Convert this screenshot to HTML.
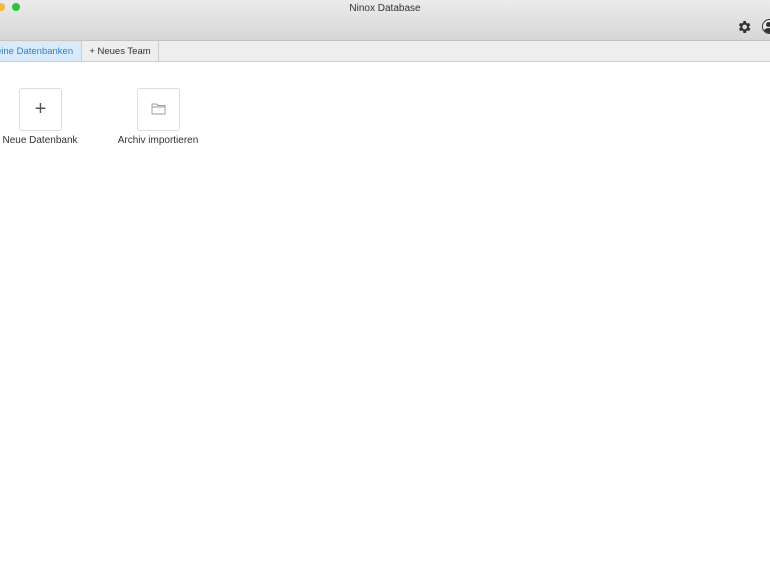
<!DOCTYPE html>
<html><head><style>
body{margin:0;width:770px;height:578px;overflow:hidden;background:#fff;font-family:"Liberation Sans",sans-serif;position:relative}
.title{position:absolute;left:0;top:0;width:770px;height:40px;background:linear-gradient(#ebebeb,#d6d6d6);border-bottom:1px solid #c4c4c4}
.title span{position:absolute;top:3px;width:770px;text-align:center;font-size:10px;color:#333}
.dot{position:absolute;top:3px;width:8px;height:8px;border-radius:50%}
.tabs{position:absolute;top:41px;left:0;width:770px;height:20px;background:#eeeeee;border-bottom:1px solid #d0d0d0}
.tab{position:absolute;top:0;height:20px;line-height:22px;font-size:9.5px;border-right:1px solid #ccc}
.card{position:absolute;top:88px;width:41px;height:41px;border:1px solid #ddd;border-radius:3px;background:#fff}
.lbl{position:absolute;top:135px;font-size:10px;color:#333;text-align:center;width:100px}
</style></head><body>
<div class="title"><span>Ninox Database</span>
<div class="dot" style="left:-3px;background:#f5b93a"></div>
<div class="dot" style="left:12px;background:#2ec23f"></div>
<svg style="position:absolute;left:736px;top:19px" width="16" height="16" viewBox="0 0 24 24"><path fill="#333" d="M19.4 13a7.5 7.5 0 000-2l2.1-1.6-2-3.5-2.5 1a7 7 0 00-1.7-1L15 3h-4l-.4 2.9a7 7 0 00-1.7 1l-2.5-1-2 3.5L6.6 11a7.5 7.5 0 000 2l-2.1 1.6 2 3.5 2.5-1a7 7 0 001.7 1L11 21h4l.4-2.9a7 7 0 001.7-1l2.5 1 2-3.5zM13 15.5a3.5 3.5 0 110-7 3.5 3.5 0 010 7z"/></svg>
<div style="position:absolute;left:762px;top:19px;width:13px;height:13px;border:1.5px solid #333;border-radius:50%;background:#eee;overflow:hidden"><div style="position:absolute;left:3px;top:2px;width:5px;height:5px;border-radius:50%;background:#333"></div><div style="position:absolute;left:1px;top:8px;width:9px;height:6px;border-radius:50% 50% 0 0;background:#333"></div></div>
</div>
<div class="tabs">
<div class="tab" style="left:0;width:81px;background:#d9ebfb;color:#2a7fd4;text-indent:-4px">eine Datenbanken</div>
<div class="tab" style="left:82px;width:76px;text-align:center;color:#333">+ Neues Team</div>
</div>
<div class="card" style="left:19px"><div style="text-align:center;line-height:40px;font-size:20px;color:#555">+</div></div>
<div class="card" style="left:137px"><svg style="position:absolute;left:13px;top:14px" width="15" height="12" viewBox="0 0 15 12"><path d="M1 1h4.5l1.5 1.5H14V11H1z M1 4h13" fill="none" stroke="#999" stroke-width="0.9"/></svg></div>
<div class="lbl" style="left:-10px">Neue Datenbank</div>
<div class="lbl" style="left:108px">Archiv importieren</div>
</body></html>
